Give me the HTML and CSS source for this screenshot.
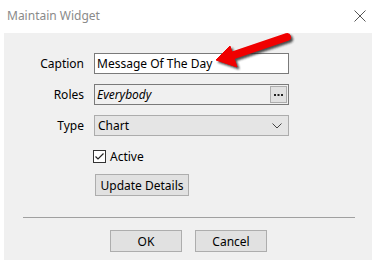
FILE: index.html
```html
<!DOCTYPE html>
<html lang="en">
  <head>
    <meta charset="UTF-8" />
    <meta name="viewport" content="width=device-width, initial-scale=1.0" />
    <title>Maintain Widget</title>
    <link rel="stylesheet" href="styles.css">
  </head>
  <body>
    <div class="dialog">
      <div class="title-bar">
        <span class="title">Maintain Widget</span>
        <svg class="close" width="12" height="12" viewBox="0 0 12 12">
          <path d="M0.5 0.5 L11.5 11.5 M11.5 0.5 L0.5 11.5" stroke="#555" stroke-width="1" fill="none" />
        </svg>
      </div>

      <div class="panel">
        <div class="form">
          <label class="label">Caption</label>
          <div class="field field-text">Message Of The Day</div>

          <label class="label">Roles</label>
          <div class="field field-roles">
            <span class="roles-value">Everybody</span>
            <span class="dots-button">
              <svg width="9" height="2" viewBox="0 0 9 2">
                <rect x="0" y="0" width="2" height="2" fill="#222" />
                <rect x="3.5" y="0" width="2" height="2" fill="#222" />
                <rect x="7" y="0" width="2" height="2" fill="#222" />
              </svg>
            </span>
          </div>

          <label class="label">Type</label>
          <div class="field field-select">
            <span>Chart</span>
            <svg class="chevron" width="10" height="6" viewBox="0 0 10 6">
              <path d="M0.5 0.5 L5 5 L9.5 0.5" stroke="#444" stroke-width="1" fill="none" />
            </svg>
          </div>
        </div>

        <div class="check-row">
          <span class="checkbox">
            <svg width="11" height="11" viewBox="0 0 11 11">
              <path d="M1.5 5.5 L4 8 L9.5 2.5" stroke="#222" stroke-width="1.2" fill="none" />
            </svg>
          </span>
          <span class="check-label">Active</span>
        </div>

        <div class="update-row">
          <button class="btn btn-update">Update Details</button>
        </div>

        <div class="separator"></div>

        <div class="actions">
          <button class="btn btn-action">OK</button>
          <button class="btn btn-action">Cancel</button>
        </div>
      </div>

      <svg class="arrow" width="375" height="262" viewBox="0 0 375 262">
        <defs>
          <filter id="blur" x="-20%" y="-20%" width="140%" height="140%">
            <feGaussianBlur stdDeviation="1.2" />
          </filter>
        </defs>
        <g transform="translate(2 2)" fill="#222" stroke="#222" filter="url(#blur)" opacity="0.8">
          <line x1="231" y1="56" x2="287" y2="37" stroke-width="8" stroke-linecap="round" />
          <polygon points="216,60 230,46 237,67" stroke-width="1" />
        </g>
        <g fill="#f00000" stroke="#f00000">
          <line x1="231" y1="56" x2="287" y2="37" stroke-width="8" stroke-linecap="round" />
          <polygon points="216,60 230,46 237,67" stroke-width="1" stroke-linejoin="round" />
        </g>
      </svg>
    </div>
  </body>
</html>
```

FILE: styles.css
```css
html,
body {
  margin: 0;
  padding: 0;
  background: #ffffff;
}
body {
  font-family: "Noto Sans", "Liberation Sans", sans-serif;
  font-size: 12px;
  color: #000000;
}
.dialog {
  position: relative;
  width: 375px;
  height: 262px;
  overflow: hidden;
}
.title-bar {
  height: 33px;
  display: flex;
  align-items: center;
  justify-content: space-between;
  padding: 0 9px 0 7px;
  box-sizing: border-box;
}
.title {
  color: #8a8a8a;
  font-size: 12px;
  margin-top: -2px;
}
.close {
  margin-top: -2px;
}
.panel {
  margin: 0 3px 0 4px;
  height: 227px;
  background: #f0f0f0;
  padding-top: 20px;
  box-sizing: border-box;
}
.form {
  display: grid;
  grid-template-columns: 80px 195px;
  grid-auto-rows: 21px;
  column-gap: 10px;
  row-gap: 10px;
}
.label {
  align-self: center;
  text-align: right;
}
.field {
  display: flex;
  align-items: center;
  box-sizing: border-box;
  border: 1px solid #7a7a7a;
  padding-left: 2px;
}
.field-text {
  background: #ffffff;
}
.field-roles {
  background: #f0f0f0;
  justify-content: space-between;
  padding-right: 1px;
}
.roles-value {
  font-style: italic;
}
.dots-button {
  width: 17px;
  height: 17px;
  box-sizing: border-box;
  border: 1px solid #adadad;
  background: #e1e1e1;
  display: flex;
  align-items: center;
  justify-content: center;
}
.field-select {
  background: #e5e5e5;
  border-color: #acacac;
  justify-content: space-between;
  padding: 0 6px 0 3px;
}
.check-row {
  display: flex;
  align-items: center;
  margin-top: 13px;
  padding-left: 89px;
  height: 14px;
}
.checkbox {
  width: 13px;
  height: 13px;
  box-sizing: border-box;
  border: 1px solid #333333;
  background: #ffffff;
  display: flex;
  align-items: center;
  justify-content: center;
}
.check-label {
  margin-left: 4px;
}
.update-row {
  margin-top: 11px;
  padding-left: 91px;
}
.btn {
  font-family: "Noto Sans", "Liberation Sans", sans-serif;
  font-size: 12px;
  color: #000000;
  background: #e1e1e1;
  border: 1px solid #adadad;
  height: 22px;
  padding: 0;
  margin: 0;
  display: block;
}
.btn-update {
  width: 94px;
}
.separator {
  margin: 21px 17px 0 19px;
  height: 1px;
  background: #a0a0a0;
}
.actions {
  display: flex;
  gap: 13px;
  margin-top: 12px;
  padding-left: 106px;
}
.btn-action {
  width: 72px;
}
.arrow {
  position: absolute;
  left: 0;
  top: 0;
  pointer-events: none;
}
```
